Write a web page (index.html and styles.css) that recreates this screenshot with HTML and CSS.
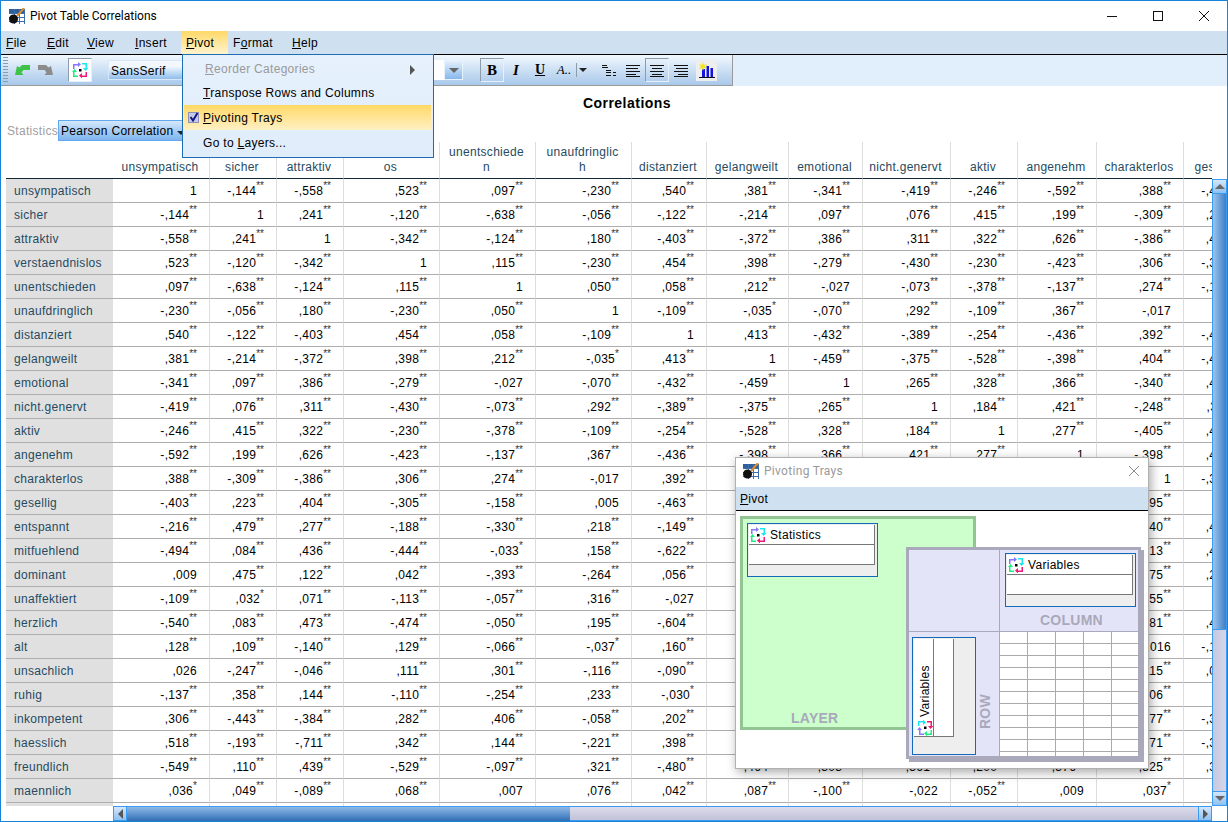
FILE: index.html
```html
<!DOCTYPE html>
<html lang="en">
<head>
<meta charset="UTF-8">
<title>Pivot Table Correlations</title>
<link rel="stylesheet" href="styles.css">
</head>
<body>
<svg class="defs" width="0" height="0">
    <symbol id="app-icon" viewBox="0 0 16 16">
        <rect x="0" y="1" width="16" height="15" fill="#fff"/>
        <rect x="0" y="1" width="16" height="4" fill="#2d5f9e"/>
        <path d="M0 5.5H16M0 9.5H16M0 13.5H16M5.5 1V16M10.5 1V16M15.5 1V16" stroke="#3d6ea8" fill="none"/>
        <path d="M8 8L15 0" stroke="#e08a2e" stroke-width="2"/>
        <circle cx="4.5" cy="11" r="4.5" fill="#111"/>
    </symbol>
    <symbol id="pivot-icon" viewBox="0 0 16 16">
        <path d="M1 7V2H6V0L9 2.5 6 5V3.5H2.5V7Z" fill="#8878ff"/>
        <path d="M10 1H15V6H16.5L13.5 9 11 6H13.5V2.5H10Z" fill="#18e8f0"/>
        <path d="M15 10V15H10V16.5L7 13.5 10 11V13.5H13.5V10Z" fill="#f01878"/>
        <path d="M6 15H1V10H0L2.5 7 5 10H2.5V13.5H6Z" fill="#18f080"/>
        <rect x="7" y="7" width="2.5" height="2.5" fill="#000"/>
    </symbol>
</svg>

<div class="win">
    <div class="titlebar">
        <svg class="app-icon"><use href="#app-icon"/></svg>
        <span class="title-text">Pivot Table Correlations</span>
        <div class="win-btns">
            <svg width="12" height="12" viewBox="0 0 12 12"><path d="M1 6.5H11" stroke="#111"/></svg>
            <svg width="12" height="12" viewBox="0 0 12 12"><rect x="1.5" y="1.5" width="9" height="9" fill="none" stroke="#111"/></svg>
            <svg width="12" height="12" viewBox="0 0 12 12"><path d="M1 1L11 11M11 1L1 11" stroke="#111"/></svg>
        </div>
    </div>

    <div class="menubar">
        <span class="mb-item"><u>F</u>ile</span>
        <span class="mb-item"><u>E</u>dit</span>
        <span class="mb-item"><u>V</u>iew</span>
        <span class="mb-item"><u>I</u>nsert</span>
        <span class="mb-item active"><u>P</u>ivot</span>
        <span class="mb-item">F<u>o</u>rmat</span>
        <span class="mb-item"><u>H</u>elp</span>
    </div>

    <div class="toolband">
        <div class="toolbar">
            <span class="grip"></span>
            <svg class="tb-arrow undo" width="16" height="11" viewBox="0 0 16 11"><path d="M16 0H8L5.500 2.500 3 1 1 10H9.500L7.500 7.500 9.500 5H16Z" fill="#3fc14a"/></svg>
            <svg class="tb-arrow redo" width="16" height="11" viewBox="0 0 16 11"><path d="M0 0H8L10.500 2.500 13 1 15 10H6.500L8.500 7.500 6.500 5H0Z" fill="#8c8c8c"/></svg>
            <span class="tool pressed pivot-btn"><svg width="16" height="16"><use href="#pivot-icon"/></svg></span>
            <div class="combo">
                <span class="combo-name">SansSerif</span>
                <span class="combo-drop"><i class="tri"></i></span>
            </div>
            <span class="tool pressed bold-btn">B</span>
            <span class="tool ital">I</span>
            <span class="tool und">U</span>
            <span class="tool size">A..</span>
            <span class="size-drop"><i class="tri small"></i></span>
            <span class="tool outline-btn"><svg width="14" height="13" viewBox="0 0 14 13"><path d="M0 1.500H5M0 3.500H6M4 6.500H9M4 8.500H9M4 11.500H9M11 8.500H14M11 11.500H14" stroke="#111" fill="none"/></svg></span>
            <span class="tool"><svg width="14" height="13" viewBox="0 0 14 13"><path d="M0 1.500H14M0 4.500H12M0 7.500H14M0 10.500H10M0 12.500H14" stroke="#111"/></svg></span>
            <span class="tool pressed"><svg width="14" height="13" viewBox="0 0 14 13"><path d="M0 1.500H14M2 4.500H12M0 7.500H14M2 10.500H12M0 12.500H14" stroke="#111"/></svg></span>
            <span class="tool"><svg width="14" height="13" viewBox="0 0 14 13"><path d="M0 1.500H14M2 4.500H14M0 7.500H14M4 10.500H14M0 12.500H14" stroke="#111"/></svg></span>
            <span class="chart-btn"><svg width="16" height="16" viewBox="0 0 16 16"><path d="M3 7H6V15H3ZM7.500 4H10V15H7.500ZM11.500 6H14V15H11.500Z" fill="#1414dd"/><path d="M0 15.500H16" stroke="#111"/><path d="M4 0L5 3 8 2 6 4.500 8 7 5 6 4 9 3 6 0 7 2 4.500 0 2 3 3Z" fill="#f2e418"/></svg></span>
        </div>
    </div>

    <div class="content">
        <div class="report-title">Correlations</div>
        <div class="layer-row">
            <span class="layer-label">Statistics</span>
            <span class="layer-select">Pearson Correlation <i class="tri small"></i></span>
        </div>
        <div class="table-area">
            <div class="viewport">
                <table class="pivot">
                    <colgroup>
                        <col class="c107"><col class="c97"><col class="c67"><col class="c67"><col class="c96"><col class="c96"><col class="c96"><col class="c75"><col class="c82"><col class="c74"><col class="c88"><col class="c67"><col class="c79"><col class="c87"><col class="c67">
                    </colgroup>
                    <thead>
                        <tr><th class="corner"></th><th>unsympatisch</th><th>sicher</th><th>attraktiv</th><th>verstaendnisl<br>os</th><th>unentschiede<br>n</th><th>unaufdringlic<br>h</th><th>distanziert</th><th>gelangweilt</th><th>emotional</th><th>nicht.genervt</th><th>aktiv</th><th>angenehm</th><th>charakterlos</th><th>gesellig</th></tr>
                    </thead>
                    <tbody>
                        <tr><th>unsympatisch</th><td>1</td><td>-,144<sup>**</sup></td><td>-,558<sup>**</sup></td><td>,523<sup>**</sup></td><td>,097<sup>**</sup></td><td>-,230<sup>**</sup></td><td>,540<sup>**</sup></td><td>,381<sup>**</sup></td><td>-,341<sup>**</sup></td><td>-,419<sup>**</sup></td><td>-,246<sup>**</sup></td><td>-,592<sup>**</sup></td><td>,388<sup>**</sup></td><td>-,403<sup>**</sup></td></tr>
                        <tr><th>sicher</th><td>-,144<sup>**</sup></td><td>1</td><td>,241<sup>**</sup></td><td>-,120<sup>**</sup></td><td>-,638<sup>**</sup></td><td>-,056<sup>**</sup></td><td>-,122<sup>**</sup></td><td>-,214<sup>**</sup></td><td>,097<sup>**</sup></td><td>,076<sup>**</sup></td><td>,415<sup>**</sup></td><td>,199<sup>**</sup></td><td>-,309<sup>**</sup></td><td>,223<sup>**</sup></td></tr>
                        <tr><th>attraktiv</th><td>-,558<sup>**</sup></td><td>,241<sup>**</sup></td><td>1</td><td>-,342<sup>**</sup></td><td>-,124<sup>**</sup></td><td>,180<sup>**</sup></td><td>-,403<sup>**</sup></td><td>-,372<sup>**</sup></td><td>,386<sup>**</sup></td><td>,311<sup>**</sup></td><td>,322<sup>**</sup></td><td>,626<sup>**</sup></td><td>-,386<sup>**</sup></td><td>,404<sup>**</sup></td></tr>
                        <tr><th>verstaendnislos</th><td>,523<sup>**</sup></td><td>-,120<sup>**</sup></td><td>-,342<sup>**</sup></td><td>1</td><td>,115<sup>**</sup></td><td>-,230<sup>**</sup></td><td>,454<sup>**</sup></td><td>,398<sup>**</sup></td><td>-,279<sup>**</sup></td><td>-,430<sup>**</sup></td><td>-,230<sup>**</sup></td><td>-,423<sup>**</sup></td><td>,306<sup>**</sup></td><td>-,305<sup>**</sup></td></tr>
                        <tr><th>unentschieden</th><td>,097<sup>**</sup></td><td>-,638<sup>**</sup></td><td>-,124<sup>**</sup></td><td>,115<sup>**</sup></td><td>1</td><td>,050<sup>**</sup></td><td>,058<sup>**</sup></td><td>,212<sup>**</sup></td><td>-,027</td><td>-,073<sup>**</sup></td><td>-,378<sup>**</sup></td><td>-,137<sup>**</sup></td><td>,274<sup>**</sup></td><td>-,158<sup>**</sup></td></tr>
                        <tr><th>unaufdringlich</th><td>-,230<sup>**</sup></td><td>-,056<sup>**</sup></td><td>,180<sup>**</sup></td><td>-,230<sup>**</sup></td><td>,050<sup>**</sup></td><td>1</td><td>-,109<sup>**</sup></td><td>-,035<sup>*</sup></td><td>-,070<sup>**</sup></td><td>,292<sup>**</sup></td><td>-,109<sup>**</sup></td><td>,367<sup>**</sup></td><td>-,017</td><td>,005</td></tr>
                        <tr><th>distanziert</th><td>,540<sup>**</sup></td><td>-,122<sup>**</sup></td><td>-,403<sup>**</sup></td><td>,454<sup>**</sup></td><td>,058<sup>**</sup></td><td>-,109<sup>**</sup></td><td>1</td><td>,413<sup>**</sup></td><td>-,432<sup>**</sup></td><td>-,389<sup>**</sup></td><td>-,254<sup>**</sup></td><td>-,436<sup>**</sup></td><td>,392<sup>**</sup></td><td>-,463<sup>**</sup></td></tr>
                        <tr><th>gelangweilt</th><td>,381<sup>**</sup></td><td>-,214<sup>**</sup></td><td>-,372<sup>**</sup></td><td>,398<sup>**</sup></td><td>,212<sup>**</sup></td><td>-,035<sup>*</sup></td><td>,413<sup>**</sup></td><td>1</td><td>-,459<sup>**</sup></td><td>-,375<sup>**</sup></td><td>-,528<sup>**</sup></td><td>-,398<sup>**</sup></td><td>,404<sup>**</sup></td><td>-,441<sup>**</sup></td></tr>
                        <tr><th>emotional</th><td>-,341<sup>**</sup></td><td>,097<sup>**</sup></td><td>,386<sup>**</sup></td><td>-,279<sup>**</sup></td><td>-,027</td><td>-,070<sup>**</sup></td><td>-,432<sup>**</sup></td><td>-,459<sup>**</sup></td><td>1</td><td>,265<sup>**</sup></td><td>,328<sup>**</sup></td><td>,366<sup>**</sup></td><td>-,340<sup>**</sup></td><td>,431<sup>**</sup></td></tr>
                        <tr><th>nicht.genervt</th><td>-,419<sup>**</sup></td><td>,076<sup>**</sup></td><td>,311<sup>**</sup></td><td>-,430<sup>**</sup></td><td>-,073<sup>**</sup></td><td>,292<sup>**</sup></td><td>-,389<sup>**</sup></td><td>-,375<sup>**</sup></td><td>,265<sup>**</sup></td><td>1</td><td>,184<sup>**</sup></td><td>,421<sup>**</sup></td><td>-,248<sup>**</sup></td><td>,311<sup>**</sup></td></tr>
                        <tr><th>aktiv</th><td>-,246<sup>**</sup></td><td>,415<sup>**</sup></td><td>,322<sup>**</sup></td><td>-,230<sup>**</sup></td><td>-,378<sup>**</sup></td><td>-,109<sup>**</sup></td><td>-,254<sup>**</sup></td><td>-,528<sup>**</sup></td><td>,328<sup>**</sup></td><td>,184<sup>**</sup></td><td>1</td><td>,277<sup>**</sup></td><td>-,405<sup>**</sup></td><td>,431<sup>**</sup></td></tr>
                        <tr><th>angenehm</th><td>-,592<sup>**</sup></td><td>,199<sup>**</sup></td><td>,626<sup>**</sup></td><td>-,423<sup>**</sup></td><td>-,137<sup>**</sup></td><td>,367<sup>**</sup></td><td>-,436<sup>**</sup></td><td>-,398<sup>**</sup></td><td>,366<sup>**</sup></td><td>,421<sup>**</sup></td><td>,277<sup>**</sup></td><td>1</td><td>-,398<sup>**</sup></td><td>,431<sup>**</sup></td></tr>
                        <tr><th>charakterlos</th><td>,388<sup>**</sup></td><td>-,309<sup>**</sup></td><td>-,386<sup>**</sup></td><td>,306<sup>**</sup></td><td>,274<sup>**</sup></td><td>-,017</td><td>,392<sup>**</sup></td><td>,404<sup>**</sup></td><td>-,340<sup>**</sup></td><td>-,248<sup>**</sup></td><td>-,405<sup>**</sup></td><td>-,398<sup>**</sup></td><td>1</td><td>-,395<sup>**</sup></td></tr>
                        <tr><th>gesellig</th><td>-,403<sup>**</sup></td><td>,223<sup>**</sup></td><td>,404<sup>**</sup></td><td>-,305<sup>**</sup></td><td>-,158<sup>**</sup></td><td>,005</td><td>-,463<sup>**</sup></td><td></td><td></td><td></td><td></td><td></td><td>-,395<sup>**</sup></td><td>1</td></tr>
                        <tr><th>entspannt</th><td>-,216<sup>**</sup></td><td>,479<sup>**</sup></td><td>,277<sup>**</sup></td><td>-,188<sup>**</sup></td><td>-,330<sup>**</sup></td><td>,218<sup>**</sup></td><td>-,149<sup>**</sup></td><td></td><td></td><td></td><td></td><td></td><td>-,240<sup>**</sup></td><td>,434<sup>**</sup></td></tr>
                        <tr><th>mitfuehlend</th><td>-,494<sup>**</sup></td><td>,084<sup>**</sup></td><td>,436<sup>**</sup></td><td>-,444<sup>**</sup></td><td>-,033<sup>*</sup></td><td>,158<sup>**</sup></td><td>-,622<sup>**</sup></td><td></td><td></td><td></td><td></td><td></td><td>-,313<sup>**</sup></td><td>,454<sup>**</sup></td></tr>
                        <tr><th>dominant</th><td>,009</td><td>,475<sup>**</sup></td><td>,122<sup>**</sup></td><td>,042<sup>**</sup></td><td>-,393<sup>**</sup></td><td>-,264<sup>**</sup></td><td>,056<sup>**</sup></td><td></td><td></td><td></td><td></td><td></td><td>,175<sup>**</sup></td><td>,271<sup>**</sup></td></tr>
                        <tr><th>unaffektiert</th><td>-,109<sup>**</sup></td><td>,032<sup>*</sup></td><td>,071<sup>**</sup></td><td>-,113<sup>**</sup></td><td>-,057<sup>**</sup></td><td>,316<sup>**</sup></td><td>-,027</td><td></td><td></td><td></td><td></td><td></td><td>,155<sup>**</sup></td><td>,051</td></tr>
                        <tr><th>herzlich</th><td>-,540<sup>**</sup></td><td>,083<sup>**</sup></td><td>,473<sup>**</sup></td><td>-,474<sup>**</sup></td><td>-,050<sup>**</sup></td><td>,195<sup>**</sup></td><td>-,604<sup>**</sup></td><td></td><td></td><td></td><td></td><td></td><td>-,281<sup>**</sup></td><td>,459<sup>**</sup></td></tr>
                        <tr><th>alt</th><td>,128<sup>**</sup></td><td>,109<sup>**</sup></td><td>-,140<sup>**</sup></td><td>,129<sup>**</sup></td><td>-,066<sup>**</sup></td><td>-,037<sup>*</sup></td><td>,160<sup>**</sup></td><td></td><td></td><td></td><td></td><td></td><td>,016</td><td>-,134<sup>**</sup></td></tr>
                        <tr><th>unsachlich</th><td>,026</td><td>-,247<sup>**</sup></td><td>-,046<sup>**</sup></td><td>,111<sup>**</sup></td><td>,301<sup>**</sup></td><td>-,116<sup>**</sup></td><td>-,090<sup>**</sup></td><td></td><td></td><td></td><td></td><td></td><td>,115<sup>**</sup></td><td>,066<sup>**</sup></td></tr>
                        <tr><th>ruhig</th><td>-,137<sup>**</sup></td><td>,358<sup>**</sup></td><td>,144<sup>**</sup></td><td>-,110<sup>**</sup></td><td>-,254<sup>**</sup></td><td>,233<sup>**</sup></td><td>-,030<sup>*</sup></td><td></td><td></td><td></td><td></td><td></td><td>-,206<sup>**</sup></td><td>,061</td></tr>
                        <tr><th>inkompetent</th><td>,306<sup>**</sup></td><td>-,443<sup>**</sup></td><td>-,384<sup>**</sup></td><td>,282<sup>**</sup></td><td>,406<sup>**</sup></td><td>-,058<sup>**</sup></td><td>,202<sup>**</sup></td><td></td><td></td><td></td><td></td><td></td><td>,277<sup>**</sup></td><td>-,343<sup>**</sup></td></tr>
                        <tr><th>haesslich</th><td>,518<sup>**</sup></td><td>-,193<sup>**</sup></td><td>-,711<sup>**</sup></td><td>,342<sup>**</sup></td><td>,144<sup>**</sup></td><td>-,221<sup>**</sup></td><td>,398<sup>**</sup></td><td></td><td></td><td></td><td></td><td></td><td>,271<sup>**</sup></td><td>-,352<sup>**</sup></td></tr>
                        <tr><th>freundlich</th><td>-,549<sup>**</sup></td><td>,110<sup>**</sup></td><td>,439<sup>**</sup></td><td>-,529<sup>**</sup></td><td>-,097<sup>**</sup></td><td>,321<sup>**</sup></td><td>-,480<sup>**</sup></td><td>,464<sup>**</sup></td><td>,303<sup>**</sup></td><td>,361<sup>**</sup></td><td>,200<sup>**</sup></td><td>,376<sup>**</sup></td><td>,325<sup>**</sup></td><td>,358<sup>**</sup></td></tr>
                        <tr><th>maennlich</th><td>,036<sup>*</sup></td><td>,049<sup>**</sup></td><td>-,089<sup>**</sup></td><td>,068<sup>**</sup></td><td>,007</td><td>,076<sup>**</sup></td><td>,042<sup>**</sup></td><td>,087<sup>**</sup></td><td>-,100<sup>**</sup></td><td>-,022</td><td>-,052<sup>**</sup></td><td>,009</td><td>,037<sup>*</sup></td><td>,045</td></tr>
                        <tr><th></th><td></td><td></td><td></td><td></td><td></td><td></td><td></td><td></td><td></td><td></td><td></td><td></td><td></td><td></td></tr>
                    </tbody>
                </table>
            </div>
            <div class="vscroll">
                <span class="sb-btn"><i class="tri up"></i></span>
                <span class="sb-thumb-v"></span>
                <span class="sb-rest"></span>
                <span class="sb-btn"><i class="tri"></i></span>
            </div>
        </div>
        <div class="hscroll">
            <span class="sb-btn"><i class="tri left"></i></span>
            <span class="sb-thumb-h"></span>
            <span class="sb-rest-h"></span>
            <span class="sb-btn"><i class="tri right"></i></span>
        </div>
    </div>

    <!-- Pivot dropdown -->
    <div class="menu">
        <div class="menu-item disabled"><span><u>R</u>eorder Categories</span><i class="tri right"></i></div>
        <div class="menu-item"><span><u>T</u>ranspose Rows and Columns</span></div>
        <div class="menu-item hover">
            <svg class="check" width="11" height="11" viewBox="0 0 11 11"><rect x="0.500" y="0.500" width="10" height="10" fill="#c5cbe6" stroke="#8e92b8"/><path d="M2.500 5L5 8.500 9.500 1" fill="none" stroke="#14148c" stroke-width="2"/></svg>
            <span><u>P</u>ivoting Trays</span>
        </div>
        <div class="menu-item"><span>Go to <u>L</u>ayers...</span></div>
    </div>

    <!-- Pivoting trays dialog -->
    <div class="trays">
        <div class="trays-title">
            <svg class="app-icon"><use href="#app-icon"/></svg>
            <span class="trays-name">Pivoting Trays</span>
            <svg class="trays-close" width="12" height="12" viewBox="0 0 12 12"><path d="M1 1L11 11M11 1L1 11" stroke="#8c8c8c"/></svg>
        </div>
        <div class="trays-menu"><u>P</u>ivot</div>
        <div class="layer-tray">
            <div class="chip">
                <div class="chip-head"><svg width="16" height="16"><use href="#pivot-icon"/></svg><span>Statistics</span></div>
                <div class="chip-blank"></div>
            </div>
            <div class="tray-label layer-name">LAYER</div>
        </div>
        <div class="pivot-tray">
            <div class="pt-corner"></div>
            <div class="pt-col">
                <div class="chip">
                    <div class="chip-head"><svg width="16" height="16"><use href="#pivot-icon"/></svg><span>Variables</span></div>
                    <div class="chip-blank"></div>
                </div>
                <div class="tray-label">COLUMN</div>
            </div>
            <div class="pt-row">
                <div class="chip-v">
                    <div class="chip-v-head"><svg class="rot" width="16" height="16"><use href="#pivot-icon"/></svg><span>Variables</span></div>
                    <div class="chip-v-blank"></div>
                </div>
                <div class="tray-label row-name">ROW</div>
            </div>
            <div class="pt-grid"></div>
        </div>
    </div>
</div>
</body>
</html>
```

FILE: styles.css
```css
html,
body {
    margin: 0;
    padding: 0;
    overflow: hidden;
}

body {
    color: #000;
    background: #fff;
    font: 12px/15px "Liberation Sans", Arial, sans-serif;
    letter-spacing: 0.3px;
}

.defs {
    position: absolute;
}

.win {
    position: relative;
    box-sizing: border-box;
    display: flex;
    flex-direction: column;
    width: 1228px;
    height: 822px;
    border: 1px solid #1883d7;
    overflow: hidden;
    background: #fff;
}

/* title bar */
.titlebar {
    box-sizing: border-box;
    display: flex;
    align-items: center;
    flex: none;
    height: 30px;
    padding: 0 0 1px 8px;
}

.app-icon {
    width: 16px;
    height: 16px;
}

.title-text {
    margin-left: 5px;
    font: 12px Roboto, "Noto Sans", sans-serif;
    letter-spacing: 0;
}

.win-btns {
    display: flex;
    gap: 34px;
    margin-left: auto;
    margin-right: 17px;
}

.win-btns svg {
    display: block;
}

/* menu bar */
.menubar {
    display: flex;
    flex: none;
    height: 23px;
    background: #cfe0f1;
    border-bottom: 1px solid #000;
}

.mb-item {
    box-sizing: border-box;
    padding: 5px 0 0 5px;
    line-height: 15px;
}

.mb-item:nth-child(1) { width: 41px; }
.mb-item:nth-child(2) { width: 40px; }
.mb-item:nth-child(3) { width: 48px; }
.mb-item:nth-child(4) { width: 51px; }
.mb-item:nth-child(5) { width: 47px; }
.mb-item:nth-child(6) { width: 59px; }

.mb-item.active {
    background: linear-gradient(#ffd966, #fff3cf);
}

/* toolbar */
.toolband {
    flex: none;
    height: 31px;
    background: #e1eefb;
}

.toolbar {
    box-sizing: border-box;
    display: flex;
    align-items: center;
    width: 732px;
    height: 31px;
    padding-left: 2px;
    background: linear-gradient(#f2f8fe, #a8c8ea);
    border-right: 1px solid #999;
    border-bottom: 1px solid #999;
}

.grip {
    width: 5px;
    height: 26px;
    background: repeating-linear-gradient(#8a9cb0 0 1px, transparent 1px 3px);
}

.undo {
    margin-left: 6px;
}

.redo {
    margin-left: 8px;
}

.tool {
    box-sizing: border-box;
    display: flex;
    align-items: center;
    justify-content: center;
    flex: none;
    width: 24px;
    height: 24px;
    font: bold 13px "Liberation Serif", serif;
    letter-spacing: 0;
}

.tool.pressed {
    border: 1px solid;
    border-color: #8d9cab #e6f0fa #e6f0fa #8d9cab;
}

.pivot-btn {
    margin-left: 14px;
    background: #fff;
}

.combo {
    display: flex;
    align-items: center;
    width: 355px;
    height: 20px;
    margin-left: 16px;
    background: #fff;
}

.combo-name {
    box-sizing: border-box;
    width: 110px;
    height: 20px;
    padding: 3px 0 0 2px;
    border: 1px solid #d8e8f8;
    background: linear-gradient(#f2f8fe 30%, #8fbdec);
}

.combo-drop {
    display: flex;
    align-items: center;
    justify-content: center;
    width: 19px;
    height: 20px;
    margin-left: auto;
    background: linear-gradient(#e4effb, #85b8ec);
    border: 1px solid #e8f2fc;
    box-sizing: border-box;
}

.tri {
    display: inline-block;
    width: 0;
    height: 0;
    border-left: 5px solid transparent;
    border-right: 5px solid transparent;
    border-top: 5px solid #666;
}

.tri.small {
    border-left-width: 4px;
    border-right-width: 4px;
    border-top: 4px solid #222;
}

.tri.up {
    border-top: 0;
    border-bottom: 5px solid #666;
}

.tri.right {
    border-top: 5px solid transparent;
    border-bottom: 5px solid transparent;
    border-left: 5px solid #555;
    border-right: 0;
}

.tri.left {
    border-top: 5px solid transparent;
    border-bottom: 5px solid transparent;
    border-right: 5px solid #555;
    border-left: 0;
}

.bold-btn {
    margin-left: 17px;
    font-size: 15px;
}

.ital {
    font-style: italic;
    font-size: 15px;
}

.und {
    text-decoration: underline;
    font-size: 14px;
}

.size {
    font-weight: normal;
    font-style: italic;
    font-size: 13px;
}

.size-drop {
    display: flex;
    align-items: center;
    justify-content: center;
    width: 12px;
    height: 14px;
    border-left: 1px solid #8d9cab;
    box-sizing: border-box;
}

.outline-btn {
    margin-left: 9px;
}

.chart-btn {
    display: flex;
    align-items: center;
    justify-content: center;
    width: 21px;
    height: 21px;
    margin-left: 3px;
    background: #eee;
}

/* report area */
.content {
    display: flex;
    flex-direction: column;
    flex: 1;
    min-height: 0;
}

.report-title {
    flex: none;
    width: 1252px;
    height: 34px;
    padding-top: 9px;
    box-sizing: border-box;
    text-align: center;
    font: bold 14px/17px "Liberation Sans", sans-serif;
    letter-spacing: 0.48px;
}

.layer-row {
    display: flex;
    flex: none;
    align-items: flex-start;
    height: 22px;
    padding-left: 6px;
}

.layer-label {
    padding-top: 4px;
    color: #a0a0a0;
    width: 51px;
}

.layer-select {
    box-sizing: border-box;
    width: 130px;
    height: 21px;
    padding: 3px 0 0 2px;
    white-space: nowrap;
    border: 1px solid #62a8ee;
    background: linear-gradient(#d4e7fb, #7fb5ee);
}

.table-area {
    display: flex;
    flex: 1;
    min-height: 0;
    margin-left: 5px;
}

.viewport {
    width: 1206px;
    overflow: hidden;
}

table.pivot {
    width: 1245px;
    table-layout: fixed;
    border-collapse: separate;
    border-spacing: 0;
    color: #000;
}

.c107 { width: 107px; }
.c97 { width: 97px; }
.c67 { width: 67px; }
.c96 { width: 96px; }
.c75 { width: 75px; }
.c82 { width: 82px; }
.c74 { width: 74px; }
.c88 { width: 88px; }
.c79 { width: 79px; }
.c87 { width: 87px; }

thead th {
    box-sizing: border-box;
    height: 37px;
    padding: 0 2px 3px 0;
    font-weight: normal;
    text-align: center;
    vertical-align: bottom;
    color: #264a60;
    border-right: 1px solid #ddd;
    border-bottom: 1px solid #152935;
    white-space: nowrap;
    overflow: hidden;
}

thead th.corner {
    border-right: 0;
}

tbody th {
    box-sizing: border-box;
    height: 24px;
    padding: 1px 0 0 8px;
    font-weight: normal;
    text-align: left;
    color: #264a60;
    background: #e0e0e0;
    border-bottom: 1px solid #aeaeae;
    white-space: nowrap;
    overflow: hidden;
}

tbody td {
    box-sizing: border-box;
    height: 24px;
    padding: 1px 12px 0 0;
    text-align: right;
    border-right: 1px solid #ddd;
    border-bottom: 1px solid #aeaeae;
    white-space: nowrap;
}

sup {
    font-size: 10px;
    line-height: 0;
    letter-spacing: 0;
    vertical-align: 6px;
    color: #333;
}

/* scrollbars */
.vscroll {
    display: flex;
    flex-direction: column;
    box-sizing: border-box;
    width: 15px;
    margin-top: 37px;
}

.sb-btn {
    box-sizing: border-box;
    display: flex;
    align-items: center;
    justify-content: center;
    flex: none;
    width: 15px;
    height: 15px;
    background: linear-gradient(#d4e7fb, #8fc0f0);
    border: 1px solid #3b9bf0;
}

.sb-thumb-v {
    flex: none;
    height: 436px;
    background: linear-gradient(to right, #9cc3ee, #3f7fc4);
    border: 1px solid #3b9bf0;
    border-top: 0;
    box-sizing: border-box;
}

.sb-rest {
    flex: 1;
    background: linear-gradient(to right, #c7c7de, #d6d6ea);
    border-left: 1px solid #3b9bf0;
    border-right: 1px solid #3b9bf0;
}

.hscroll {
    display: flex;
    flex: none;
    box-sizing: border-box;
    width: 1099px;
    height: 15px;
    margin-left: 112px;
}

.hscroll .sb-btn {
    width: 14px;
}

.sb-thumb-h {
    flex: none;
    width: 443px;
    background: linear-gradient(#8fb9e8, #2f6fb4);
    border-top: 1px solid #3b9bf0;
    box-sizing: border-box;
}

.sb-rest-h {
    flex: 1;
    background: linear-gradient(#dcdcec, #c2c2d8);
    border-top: 1px solid #3b9bf0;
    border-bottom: 1px solid #3b9bf0;
    box-sizing: border-box;
}

/* dropdown */
.menu {
    position: absolute;
    left: 181px;
    top: 53px;
    box-sizing: border-box;
    width: 252px;
    height: 104px;
    padding: 1px 2px 0 1px;
    background: linear-gradient(#e6f1fc, #dfecfa);
    border: 1px solid #1d6db5;
}

.menu-item {
    position: relative;
    display: flex;
    align-items: center;
    box-sizing: border-box;
    height: 25px;
    padding: 1px 0 0 19px;
}

.menu-item.disabled {
    height: 24px;
    padding-top: 3px;
    padding-left: 21px;
    color: #9a9a9a;
}

.menu-item.hover {
    background: linear-gradient(#ffd966, #fff0c4);
}

.menu-item .tri {
    margin-left: auto;
    margin-right: 16px;
}

.check {
    position: absolute;
    left: 4px;
    top: 7px;
}

/* trays dialog */
.trays {
    position: absolute;
    left: 734px;
    top: 456px;
    box-sizing: border-box;
    width: 414px;
    height: 312px;
    background: #fff;
    border: 1px solid #b0b0b0;
    box-shadow: 2px 3px 10px rgba(0, 0, 0, 0.35);
}

.trays-title {
    box-sizing: border-box;
    display: flex;
    align-items: center;
    height: 29px;
    padding: 0 0 3px 7px;
}

.trays-name {
    margin-left: 5px;
    color: #999;
    font: 12px Roboto, "Noto Sans", sans-serif;
}

.trays-close {
    margin-left: auto;
    margin-right: 8px;
}

.trays-menu {
    box-sizing: border-box;
    height: 24px;
    padding: 5px 0 0 4px;
    background: #cfe0f1;
    border-bottom: 1px solid #000;
}

.layer-tray {
    box-sizing: border-box;
    display: flex;
    flex-direction: column;
    width: 236px;
    height: 214px;
    margin: 5px 0 0 4px;
    padding: 4px 4px 1px;
    background: #ccffcc;
    border: 3px solid #93c493;
}

.chip {
    box-sizing: border-box;
    flex: none;
    width: 131px;
    height: 54px;
    padding: 1px 2px 0 1px;
    background: #eee;
    border: 1px solid #1469b8;
}

.chip-head {
    box-sizing: border-box;
    display: flex;
    align-items: center;
    gap: 4px;
    height: 20px;
    padding: 1px 0 0 1px;
    background: #fff;
    border-right: 1px solid #777;
    border-bottom: 1px solid #777;
}

.chip-blank {
    box-sizing: border-box;
    height: 20px;
    background: #fff;
    border-right: 1px solid #777;
    border-bottom: 1px solid #777;
}

.tray-label {
    color: #a9a9bb;
    font: bold 14px/16px "Liberation Sans", sans-serif;
    letter-spacing: 0.25px;
}

.layer-name {
    margin-top: auto;
    padding-left: 44px;
}

.pivot-tray {
    position: absolute;
    left: 170px;
    top: 89px;
    box-sizing: border-box;
    display: grid;
    grid-template-columns: 91px 138px;
    grid-template-rows: 82px 124px;
    width: 235px;
    height: 212px;
    background: #e4e4f8;
    border: 3px solid #a9a9bb;
    box-shadow: 3px 3px 0 #a9a9bb;
}

.pt-corner {
    border-right: 1px solid #a9a9bb;
    border-bottom: 1px solid #a9a9bb;
}

.pt-col {
    display: flex;
    flex-direction: column;
    box-sizing: border-box;
    padding: 3px 0 0 5px;
    border-bottom: 1px solid #a9a9bb;
}

.pt-col .tray-label {
    margin-top: 5px;
    padding-left: 35px;
}

.pt-row {
    display: flex;
    box-sizing: border-box;
    padding: 5px 0 0 3px;
    border-right: 1px solid #a9a9bb;
}

.chip-v {
    box-sizing: border-box;
    display: flex;
    align-items: flex-start;
    width: 64px;
    height: 118px;
    padding: 1px 0 0 1px;
    background: #eee;
    border: 1px solid #1469b8;
}

.chip-v-head {
    box-sizing: border-box;
    display: flex;
    align-items: center;
    gap: 3px;
    width: 20px;
    height: 98px;
    padding-right: 3px;
    writing-mode: vertical-rl;
    transform: rotate(180deg);
    background: #fff;
    border-left: 1px solid #777;
    border-top: 1px solid #777;
}

.rot {
    transform: rotate(90deg);
}

.chip-v-blank {
    box-sizing: border-box;
    width: 20px;
    height: 98px;
    background: #fff;
    border-right: 1px solid #777;
    border-bottom: 1px solid #777;
}

.row-name {
    margin: 58px 0 0 1px;
    height: 34px;
    writing-mode: vertical-rl;
    transform: rotate(180deg);
}

.pt-grid {
    background-color: #fff;
    background-image:
        repeating-linear-gradient(to right, transparent 0 27px, #aaa 27px 28px),
        repeating-linear-gradient(to bottom, transparent 0 11px, #aaa 11px 12px);
}
```
